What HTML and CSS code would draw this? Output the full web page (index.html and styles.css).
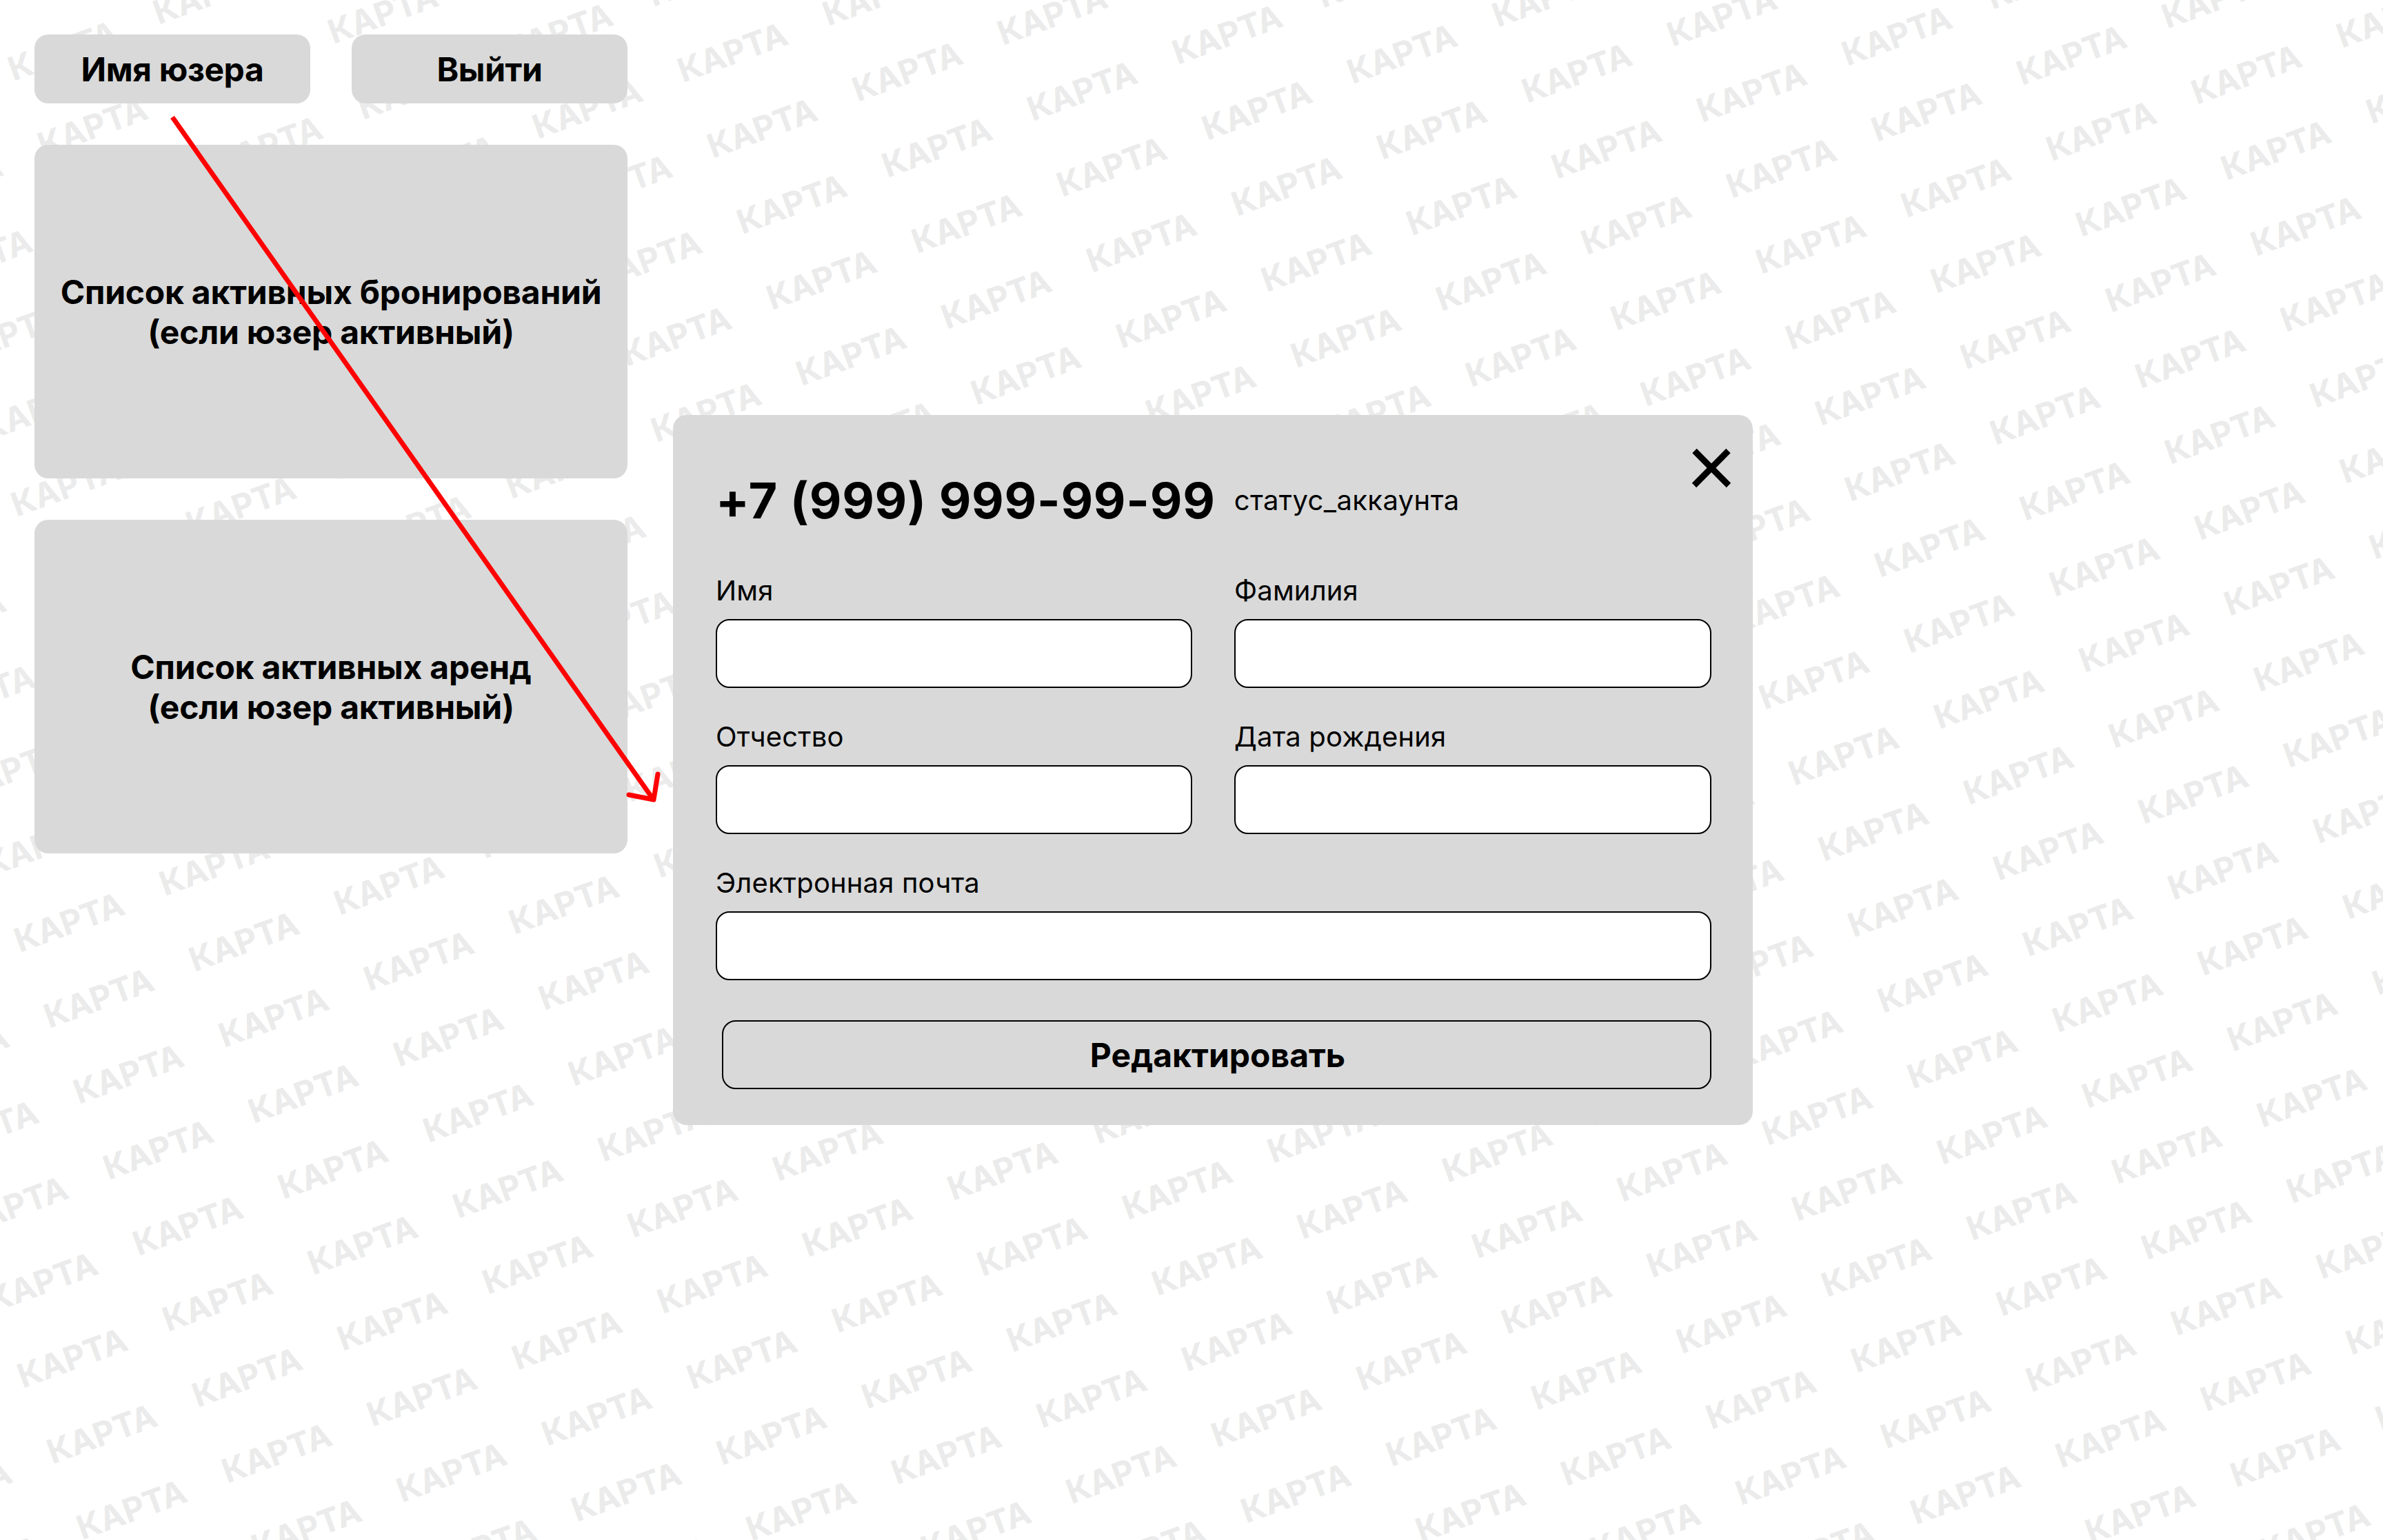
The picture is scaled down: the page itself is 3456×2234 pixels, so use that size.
FILE: index.html
```html
<!DOCTYPE html>
<html lang="ru">
<head>
    <meta charset="UTF-8">
    <meta name="viewport" content="width=device-width, initial-scale=1.0">
    <title>Профиль юзера</title>
    <link rel="stylesheet" href="styles.css">
</head>
<body>
    <svg class="map" id="map" width="3456" height="2234"></svg>

    <div class="page">
        <aside class="sidebar">
            <div class="topbar">
                <button class="topbtn">Имя юзера</button>
                <button class="topbtn">Выйти</button>
            </div>
            <div class="card">Список активных бронирований<br>(если юзер активный)</div>
            <div class="card">Список активных аренд<br>(если юзер активный)</div>
        </aside>

        <section class="modal">
            <div class="modal-head">
                <h1 class="phone">+7 (999) 999-99-99</h1>
                <span class="status">статус_аккаунта</span>
            </div>
            <svg class="close" width="64" height="64" viewBox="0 0 64 64">
                <path d="M7.5 7 L57 57 M56.5 7 L7 57"></path>
            </svg>
            <form class="fields">
                <div class="field">
                    <label>Имя</label>
                    <input type="text">
                </div>
                <div class="field">
                    <label>Фамилия</label>
                    <input type="text">
                </div>
                <div class="field">
                    <label>Отчество</label>
                    <input type="text">
                </div>
                <div class="field">
                    <label>Дата рождения</label>
                    <input type="text">
                </div>
                <div class="field wide">
                    <label>Электронная почта</label>
                    <input type="text">
                </div>
            </form>
            <button class="edit">Редактировать</button>
        </section>
    </div>

    <svg class="arrow" width="3456" height="2234">
        <path class="arrow-line" d="M250 170 L947 1159"></path>
        <path class="arrow-head" d="M912 1153 L948 1160 L954 1123"></path>
    </svg>

    <script src="map.js"></script>
</body>
</html>
```

FILE: styles.css
```css
* {
    box-sizing: border-box;
}
body {
    font-family: Inter, "Noto Sans", sans-serif;
    background-color: #fff;
    color: #000;
    margin: 0;
    width: 3456px;
    height: 2234px;
    overflow: hidden;
    position: relative;
}
.map {
    position: absolute;
    top: 0;
    left: 0;
}
.map text {
    font-family: Inter, sans-serif;
    font-size: 48px;
    font-weight: 700;
    fill: #ebebeb;
}
.page {
    position: relative;
    display: flex;
    align-items: flex-start;
    padding: 50px;
}
.sidebar {
    width: 860px;
    display: flex;
    flex-direction: column;
    gap: 60px;
}
.topbar {
    display: flex;
    justify-content: space-between;
}
.topbtn {
    width: 400px;
    height: 100px;
    border: none;
    border-radius: 20px;
    background-color: #d9d9d9;
    font-family: inherit;
    font-size: 48px;
    font-weight: 700;
    letter-spacing: -0.4px;
    color: #000;
}
.card {
    height: 484px;
    border-radius: 20px;
    background-color: #d9d9d9;
    display: flex;
    align-items: center;
    justify-content: center;
    text-align: center;
    font-size: 48px;
    font-weight: 700;
    letter-spacing: -0.25px;
    line-height: 58px;
    padding-top: 2px;
}
.modal {
    position: relative;
    width: 1566px;
    height: 1030px;
    margin-left: 66px;
    margin-top: 552px;
    padding: 85px 60px 0 62px;
    border-radius: 20px;
    background-color: #d9d9d9;
}
.modal-head {
    display: flex;
    align-items: center;
    gap: 27px;
    height: 78px;
}
.phone {
    margin: 0;
    font-size: 72px;
    font-weight: 700;
    letter-spacing: 0.7px;
    line-height: 78px;
}
.status {
    font-size: 40px;
    letter-spacing: 0.4px;
    line-height: 48px;
}
.close {
    position: absolute;
    top: 45px;
    right: 28px;
}
.close path {
    fill: none;
    stroke: #000;
    stroke-width: 9;
}
.fields {
    display: grid;
    grid-template-columns: 691px 692px;
    column-gap: 61px;
    row-gap: 47px;
    margin-top: 68px;
}
.field {
    display: flex;
    flex-direction: column;
}
.field.wide {
    grid-column: 1 / 3;
}
.field label {
    font-size: 40px;
    letter-spacing: 0.15px;
    line-height: 48px;
    margin-bottom: 17px;
}
.field input {
    height: 100px;
    border: 2px solid #000;
    border-radius: 20px;
    background-color: #fff;
}
.edit {
    display: block;
    width: 1435px;
    height: 100px;
    margin: 58px 0 0 9px;
    padding-left: 9px;
    border: 2px solid #000;
    border-radius: 20px;
    background-color: transparent;
    font-family: inherit;
    font-size: 48px;
    font-weight: 700;
    color: #000;
}
.arrow {
    position: absolute;
    top: 0;
    left: 0;
    pointer-events: none;
}
.arrow-line {
    stroke: #f00;
    stroke-width: 7;
}
.arrow-head {
    fill: none;
    stroke: #f00;
    stroke-width: 7;
    stroke-linecap: round;
    stroke-linejoin: round;
}
```

FILE: map.js
```js
// repeat the map label over the whole page, the grid is slanted
const map = document.getElementById('map');
const startX = 2425.6;
const startY = 68;

for (let i = -30; i < 30; i++) {
    for (let j = -30; j < 30; j++) {
        const x = startX + i * 253.5 + j * 43;
        const y = startY + i * 28 + j * 110;
        if (x < -200 || x > 3500 || y < -20 || y > 2320) continue;

        const label = document.createElementNS('http://www.w3.org/2000/svg', 'text');
        label.textContent = 'КАРТА';
        label.setAttribute('x', x);
        label.setAttribute('y', y);
        label.setAttribute('transform', `rotate(-20 ${x} ${y})`);
        map.appendChild(label);
    }
}
```
